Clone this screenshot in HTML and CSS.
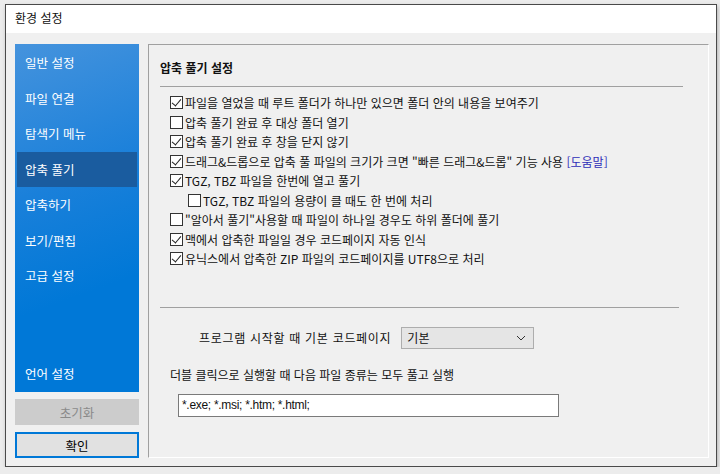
FILE: index.html
```html
<!DOCTYPE html>
<html lang="ko">
<head>
  <meta charset="UTF-8">
  <meta name="viewport" content="width=device-width, initial-scale=1.0">
  <title>환경 설정</title>
  <link rel="stylesheet" href="styles.css">
</head>
<body>

  <div class="window">
    <div class="titlebar">환경 설정</div>

    <div class="window-body">
      <div class="side">
        <ul class="menu">
          <li>일반 설정</li>
          <li>파일 연결</li>
          <li>탐색기 메뉴</li>
          <li class="active">압축 풀기</li>
          <li>압축하기</li>
          <li>보기/편집</li>
          <li>고급 설정</li>
          <li class="last">언어 설정</li>
        </ul>
        <button class="btn btn-disabled" disabled>초기화</button>
        <button class="btn btn-ok">확인</button>
      </div>

      <div class="panel">
        <h2>압축 풀기 설정</h2>
        <hr>

        <ul class="options">
          <li><span class="box on"></span>파일을 열었을 때 루트 폴더가 하나만 있으면 폴더 안의 내용을 보여주기</li>
          <li><span class="box"></span>압축 풀기 완료 후 대상 폴더 열기</li>
          <li><span class="box on"></span>압축 풀기 완료 후 창을 닫지 않기</li>
          <li><span class="box on"></span>드래그&amp;드롭으로 압축 풀 파일의 크기가 크면 "빠른 드래그&amp;드롭" 기능 사용&nbsp;<a href="#">[도움말]</a></li>
          <li><span class="box on"></span>TGZ, TBZ 파일을 한번에 열고 풀기</li>
          <li class="sub"><span class="box"></span>TGZ, TBZ 파일의 용량이 클 때도 한 번에 처리</li>
          <li><span class="box"></span>"알아서 풀기"사용할 때 파일이 하나일 경우도 하위 폴더에 풀기</li>
          <li><span class="box on"></span>맥에서 압축한 파일일 경우 코드페이지 자동 인식</li>
          <li><span class="box on"></span>유닉스에서 압축한 ZIP 파일의 코드페이지를 UTF8으로 처리</li>
        </ul>

        <hr class="lower">

        <div class="codepage">
          <span class="codepage-label">프로그램 시작할 때 기본 코드페이지</span>
          <div class="select">
            <span>기본</span>
            <svg width="10" height="6" viewBox="0 0 10 6"><polyline points="1,1 5,5 9,1" fill="none" stroke="#333" stroke-width="1"/></svg>
          </div>
        </div>

        <p class="run-label">더블 클릭으로 실행할 때 다음 파일 종류는 모두 풀고 실행</p>
        <div class="textbox">*.exe; *.msi; *.htm; *.html;</div>
      </div>
    </div>
  </div>

</body>
</html>
```

FILE: styles.css
```css
body {
  margin: 0;
  background-color: #ececec;
  font-family: "Noto Sans CJK KR", "Noto Sans", sans-serif;
  font-size: 12px;
  color: #111;
}

.window {
  width: 710px;
  height: 461px;
  margin: 4px 0 0 5px;
  border: 1px solid #4a4a4a;
  background-color: #f0f0f0;
  box-shadow: 1px 2px 4px rgba(0, 0, 0, 0.25);
  display: flex;
  flex-direction: column;
}

.titlebar {
  height: 28px;
  line-height: 26px;
  padding-left: 9px;
  background-color: #fff;
  font-size: 12px;
}

.window-body {
  flex: 1;
  display: flex;
  gap: 9px;
  padding: 11px 7px 8px 9px;
}

/* left column */
.side {
  width: 124px;
  display: flex;
  flex-direction: column;
  gap: 7px;
}

.menu {
  flex: 1;
  list-style: none;
  margin: 0;
  padding: 1px 2px 1px 2px;
  display: flex;
  flex-direction: column;
  background: linear-gradient(160deg, #4593dd 0%, #1a80da 40%, #0078d7 70%, #0078d7 100%);
}

.menu li {
  height: 35.5px;
  line-height: 35px;
  padding-left: 8px;
  color: #fff;
  font-size: 12.5px;
}

.menu li.active {
  background-color: #1a5c9f;
}

.menu li.last {
  margin-top: auto;
}

.btn {
  height: 26px;
  font-family: inherit;
  font-size: 12.5px;
  padding: 0;
}

.btn-disabled {
  background-color: #cccccc;
  border: 1px solid #cccccc;
  color: #8a8a8a;
}

.btn-ok {
  background-color: #e1e1e1;
  border: 2px solid #0078d7;
  color: #000;
}

/* right panel */
.panel {
  flex: 1;
  border-top: 1px solid #a0a0a0;
  border-left: 1px solid #a0a0a0;
  border-right: 1px solid #fff;
  border-bottom: 1px solid #fff;
  padding: 13px 0 0 11px;
}

.panel h2 {
  margin: 0;
  font-size: 12px;
  font-weight: bold;
  line-height: 20px;
}

.panel hr {
  margin: 8px 25px 0 0;
  border: none;
  border-top: 1px solid #a0a0a0;
  height: 0;
}

.options {
  list-style: none;
  margin: 6px 0 0 10px;
  padding: 0;
}

.options li {
  height: 19.5px;
  display: flex;
  align-items: center;
  white-space: nowrap;
}

.options li.sub {
  padding-left: 18px;
}

.options a {
  color: #2e2eb8;
  text-decoration: none;
}

.box {
  width: 11px;
  height: 11px;
  border: 1px solid #333;
  background-color: #fff;
  margin-right: 2px;
  flex-shrink: 0;
  position: relative;
}

.box.on::after {
  content: "";
  position: absolute;
  left: 3px;
  top: 0px;
  width: 4px;
  height: 8px;
  border-right: 1px solid #222;
  border-bottom: 1px solid #222;
  transform: rotate(40deg);
}

.panel hr.lower {
  margin-top: 38px;
  margin-right: 29px;
}

.codepage {
  display: flex;
  align-items: center;
  gap: 10px;
  margin: 19px 0 0 39px;
}

.codepage-label {
  letter-spacing: 0.7px;
}

.select {
  height: 20px;
  border: 1px solid #adadad;
  background-color: #e5e5e5;
  display: flex;
  align-items: center;
  justify-content: space-between;
  padding: 0 7px 0 5px;
  box-sizing: content-box;
  width: 119px;
}

.run-label {
  margin: 16px 0 0 10px;
  line-height: 20px;
}

.textbox {
  width: 376px;
  height: 21px;
  line-height: 21px;
  margin: 9px 0 0 18px;
  padding-left: 3px;
  border: 1px solid #7a7a7a;
  background-color: #fff;
  font-family: "Liberation Sans", Arial, sans-serif;
  font-size: 12px;
  letter-spacing: -0.3px;
}
```
